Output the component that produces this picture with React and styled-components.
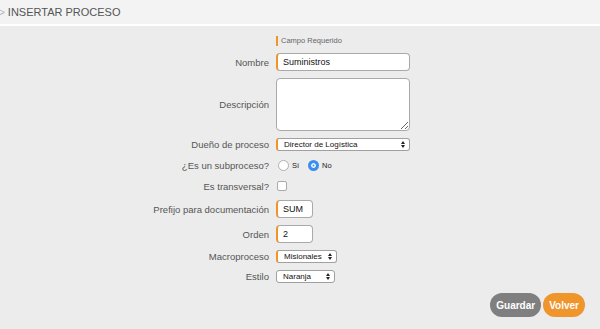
import styled, { createGlobalStyle } from "styled-components";

const Global = createGlobalStyle`
  body {
    margin: 0;
    background: #ececec;
    font-family: "Liberation Sans", Arial, sans-serif;
  }
`;

export default function App() {
  return (
    <>
      <Global />
      <Header>
        <Flecha>&gt;</Flecha>
        <Titulo>INSERTAR PROCESO</Titulo>
      </Header>
      <Formulario>
        <Fila h={10}>
          <Etiqueta />
          <Requerido>Campo Requerido</Requerido>
        </Fila>
        <Fila h={18}>
          <Etiqueta>Nombre</Etiqueta>
          <Campo w={134} requerido defaultValue="Suministros" />
        </Fila>
        <Fila h={53}>
          <Etiqueta>Descripción</Etiqueta>
          <Area />
        </Fila>
        <Fila h={13}>
          <Etiqueta>Dueño de proceso</Etiqueta>
          <Selector w={134} requerido valor="Director de Logística" />
        </Fila>
        <Fila h={14}>
          <Etiqueta>¿Es un subproceso?</Etiqueta>
          <Opciones>
            <Radio />
            <Opcion>Sí</Opcion>
            <Radio marcado />
            <Opcion>No</Opcion>
          </Opciones>
        </Fila>
        <Fila h={14}>
          <Etiqueta>Es transversal?</Etiqueta>
          <Check />
        </Fila>
        <Fila h={18}>
          <Etiqueta>Prefijo para documentación</Etiqueta>
          <Campo w={37} requerido defaultValue="SUM" />
        </Fila>
        <Fila h={18}>
          <Etiqueta>Orden</Etiqueta>
          <Campo w={37} requerido defaultValue="2" />
        </Fila>
        <Fila h={13}>
          <Etiqueta>Macroproceso</Etiqueta>
          <Selector w={61} requerido valor="Misionales" />
        </Fila>
        <Fila h={13}>
          <Etiqueta>Estilo</Etiqueta>
          <Selector w={59} valor="Naranja" />
        </Fila>
      </Formulario>
      <Acciones>
        <Boton color="#7f7f7f">Guardar</Boton>
        <Boton color="#f0952c">Volver</Boton>
      </Acciones>
    </>
  );
}

function Selector({ w, requerido, valor }) {
  return (
    <CajaSelect w={w} requerido={requerido}>
      <span>{valor}</span>
      <Flechas>
        <Tri />
        <Tri abajo />
      </Flechas>
    </CajaSelect>
  );
}

const Header = styled.header`
  height: 24px;
  background: #f3f3f3;
  border-bottom: 2px solid #ffffff;
  display: flex;
  align-items: center;
  gap: 3px;
`;

const Flecha = styled.span`
  color: #b5b5b5;
  font-size: 10px;
  margin-left: -1px;
`;

const Titulo = styled.h1`
  margin: 0;
  font-size: 11px;
  font-weight: 400;
  color: #555;
`;

const Formulario = styled.main`
  display: flex;
  flex-direction: column;
  gap: 7px;
  padding-top: 10px;
`;

const Fila = styled.div`
  display: flex;
  align-items: center;
  height: ${(p) => p.h}px;
  gap: 7px;
`;

const Etiqueta = styled.label`
  width: 269px;
  text-align: right;
  font-size: 9.5px;
  color: #555;
  flex-shrink: 0;
`;

const Requerido = styled.span`
  border-left: 2px solid #f0952c;
  padding-left: 3px;
  font-size: 7.5px;
  color: #666;
  line-height: 10px;
`;

const Campo = styled.input`
  box-sizing: border-box;
  width: ${(p) => p.w}px;
  height: 18px;
  border: 1px solid #a9a9a9;
  border-left: ${(p) => (p.requerido ? "2px solid #f0952c" : "1px solid #a9a9a9")};
  border-radius: 4px;
  background: #fff;
  padding: 0 5px;
  font-family: "Liberation Sans", Arial, sans-serif;
  font-size: 9px;
  color: #111;
  outline: none;
`;

const Area = styled.textarea`
  box-sizing: border-box;
  width: 134px;
  height: 53px;
  border: 1px solid #a9a9a9;
  border-radius: 4px;
  background: #fff;
  resize: both;
  outline: none;
`;

const CajaSelect = styled.div`
  box-sizing: border-box;
  width: ${(p) => p.w}px;
  height: 13px;
  border: 1px solid #a0a0a0;
  border-left: ${(p) => (p.requerido ? "2px solid #f0952c" : "1px solid #a0a0a0")};
  border-radius: 3px;
  background: #fff;
  display: flex;
  align-items: center;
  justify-content: space-between;
  padding: 0 4px 0 6px;
  font-size: 8px;
  color: #111;
`;

const Flechas = styled.span`
  display: flex;
  flex-direction: column;
  gap: 1px;
`;

const Tri = styled.span`
  width: 0;
  height: 0;
  border-left: 2px solid transparent;
  border-right: 2px solid transparent;
  border-${(p) => (p.abajo ? "top" : "bottom")}: 3px solid #222;
`;

const Opciones = styled.div`
  display: flex;
  align-items: center;
  gap: 3px;
`;

const Radio = styled.span`
  box-sizing: border-box;
  width: 11px;
  height: 11px;
  border-radius: 50%;
  background: ${(p) => (p.marcado ? "#3b8ff0" : "#fff")};
  border: ${(p) => (p.marcado ? "3.5px solid #3b8ff0" : "1px solid #b0b0b0")};
  box-shadow: ${(p) => (p.marcado ? "inset 0 0 0 1.5px #fff" : "none")};
  margin-left: 2px;
`;

const Opcion = styled.span`
  font-size: 7.5px;
  color: #222;
  margin-right: 4px;
`;

const Check = styled.span`
  box-sizing: border-box;
  width: 10px;
  height: 10px;
  border: 1px solid #a9a9a9;
  border-radius: 2px;
  background: #fff;
  margin-left: 1px;
`;

const Acciones = styled.footer`
  display: flex;
  justify-content: flex-end;
  gap: 2px;
  padding: 10px 15px 0 0;
`;

const Boton = styled.button`
  height: 24px;
  padding: 0 6px;
  border: none;
  border-radius: 12px;
  background: ${(p) => p.color};
  color: #fff;
  font-family: "Liberation Sans", Arial, sans-serif;
  font-weight: 700;
  font-size: 10px;
  cursor: pointer;
`;
